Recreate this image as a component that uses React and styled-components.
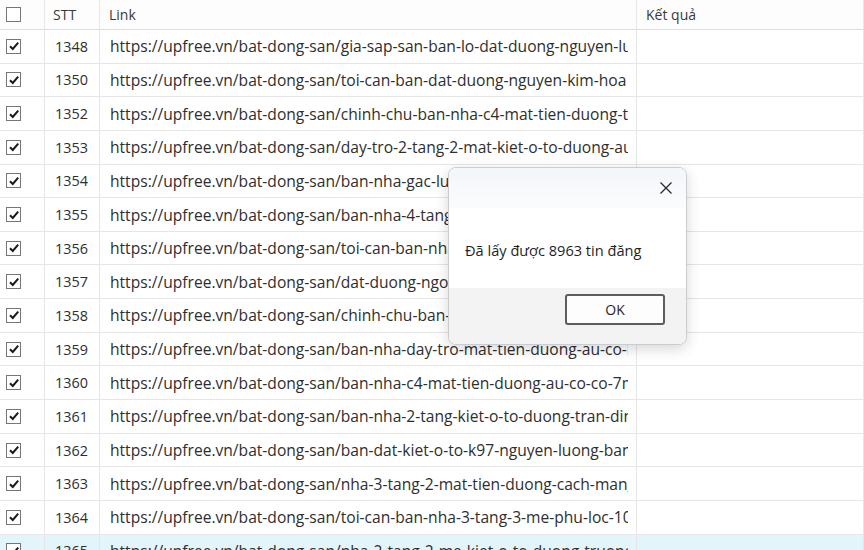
import React from "react";
import styled, { createGlobalStyle } from "styled-components";

const rows = [
  [1348, "https://upfree.vn/bat-dong-san/gia-sap-san-ban-lo-dat-duong-nguyen-luong-bang"],
  [1350, "https://upfree.vn/bat-dong-san/toi-can-ban-dat-duong-nguyen-kim-hoa"],
  [1352, "https://upfree.vn/bat-dong-san/chinh-chu-ban-nha-c4-mat-tien-duong-ton-dan"],
  [1353, "https://upfree.vn/bat-dong-san/day-tro-2-tang-2-mat-kiet-o-to-duong-au-co"],
  [1354, "https://upfree.vn/bat-dong-san/ban-nha-gac-lung-kiet-o-to"],
  [1355, "https://upfree.vn/bat-dong-san/ban-nha-4-tang-mat-tien"],
  [1356, "https://upfree.vn/bat-dong-san/toi-can-ban-nha-kiet"],
  [1357, "https://upfree.vn/bat-dong-san/dat-duong-ngo-si-lien"],
  [1358, "https://upfree.vn/bat-dong-san/chinh-chu-ban-dat"],
  [1359, "https://upfree.vn/bat-dong-san/ban-nha-day-tro-mat-tien-duong-au-co-lien-chieu"],
  [1360, "https://upfree.vn/bat-dong-san/ban-nha-c4-mat-tien-duong-au-co-co-7m"],
  [1361, "https://upfree.vn/bat-dong-san/ban-nha-2-tang-kiet-o-to-duong-tran-dinh-tri"],
  [1362, "https://upfree.vn/bat-dong-san/ban-dat-kiet-o-to-k97-nguyen-luong-bang"],
  [1363, "https://upfree.vn/bat-dong-san/nha-3-tang-2-mat-tien-duong-cach-mang-thang-8"],
  [1364, "https://upfree.vn/bat-dong-san/toi-can-ban-nha-3-tang-3-me-phu-loc-10"],
  [1365, "https://upfree.vn/bat-dong-san/nha-2-tang-2-me-kiet-o-to-duong-truong-chinh", true],
];

const GlobalStyle = createGlobalStyle`
  html, body {
    margin: 0;
    padding: 0;
    background: #ffffff;
    overflow: hidden;
  }
  body {
    font-family: "Open Sans", "Noto Sans", sans-serif;
    color: #2b2b2b;
  }
`;

const Screen = styled.div`
  position: relative;
  width: 864px;
  height: 550px;
  overflow: hidden;
  background: #fff;
`;

const Grid = styled.div`
  display: grid;
  grid-template-columns: 45px 55px 537px 1fr;
`;

const HeadCell = styled.div`
  height: 30px;
  display: flex;
  align-items: center;
  padding-left: ${p => p.$pad || 8}px;
  font-size: 14px;
  color: #3a3a3a;
  border-right: 1px solid #e8e8e8;
  border-bottom: 1px solid #dedede;
  box-sizing: border-box;
  background: #fdfdfd;
`;

const Cell = styled.div`
  height: 33.65px;
  display: flex;
  align-items: center;
  justify-content: ${p => (p.$right ? "flex-end" : "flex-start")};
  padding: 0 ${p => (p.$right ? 11 : p.$link ? 8 : 0)}px 0 ${p => p.$pad ?? 10}px;
  font-size: ${p => (p.$link ? 15.6 : 14.4)}px;
  color: #2e2e2e;
  white-space: nowrap;
  overflow: hidden;
  border-right: 1px solid #e6e6e6;
  border-bottom: 1px solid #e6e6e6;
  box-sizing: border-box;
  background: ${p => (p.$selected ? "#e3f4fb" : "#fff")};
`;

const LinkText = styled.span`
  flex: 1;
  min-width: 0;
  overflow: hidden;
`;

const Box = styled.span`
  width: 15px;
  height: 15px;
  border: 1px solid #767676;
  background: #fff;
  display: inline-flex;
  align-items: center;
  justify-content: center;
  box-sizing: border-box;
`;

const Check = ({ on }) => (
  <Box>
    {on && (
      <svg width="12" height="12" viewBox="0 0 12 12">
        <path d="M2 6.2 L4.8 9 L10.2 2.6" fill="none" stroke="#1a1a1a" strokeWidth="2" />
      </svg>
    )}
  </Box>
);

const Dialog = styled.div`
  position: absolute;
  left: 448px;
  top: 167px;
  width: 237px;
  height: 176px;
  border: 1px solid #c9ccd1;
  border-radius: 8px;
  background: #fff;
  box-shadow: 0 4px 14px rgba(0, 0, 0, 0.16);
  display: flex;
  flex-direction: column;
  overflow: hidden;
`;

const TitleBar = styled.div`
  height: 40px;
  display: flex;
  justify-content: flex-end;
  align-items: center;
  padding-right: 13px;
  background: linear-gradient(#f3f6fa, #fbfcfd);
`;

const Message = styled.div`
  flex: 1;
  padding: 32px 0 0 16px;
  font-size: 14.6px;
  color: #1f1f1f;
`;

const Footer = styled.div`
  height: 50px;
  background: #f3f3f3;
  display: flex;
  justify-content: flex-end;
  align-items: flex-start;
  padding: 6px 21px 0 0;
`;

const OkButton = styled.button`
  width: 100px;
  height: 31px;
  border: 2px solid #5d5d5d;
  border-radius: 3px;
  background: #fdfdfd;
  font-family: "Open Sans", "Noto Sans", sans-serif;
  font-size: 14px;
  color: #1f1f1f;
`;

export default function App() {
  return (
    <Screen>
      <GlobalStyle />
      <Grid>
        <HeadCell $pad={6}><Check /></HeadCell>
        <HeadCell>STT</HeadCell>
        <HeadCell $pad={9}>Link</HeadCell>
        <HeadCell $pad={9}>Kết quả</HeadCell>
        {rows.map(([stt, link, sel]) => (
          <React.Fragment key={stt}>
            <Cell $pad={6} $selected={sel}><Check on /></Cell>
            <Cell $right $pad={0} $selected={sel}>{stt}</Cell>
            <Cell $link $selected={sel}><LinkText>{link}</LinkText></Cell>
            <Cell $selected={sel} />
          </React.Fragment>
        ))}
      </Grid>
      <Dialog>
        <TitleBar>
          <svg width="14" height="14" viewBox="0 0 14 14">
            <path d="M1.5 1.5 L12.5 12.5 M12.5 1.5 L1.5 12.5" stroke="#2a2a2a" strokeWidth="1.3" />
          </svg>
        </TitleBar>
        <Message>Đã lấy được 8963 tin đăng</Message>
        <Footer>
          <OkButton>OK</OkButton>
        </Footer>
      </Dialog>
    </Screen>
  );
}
